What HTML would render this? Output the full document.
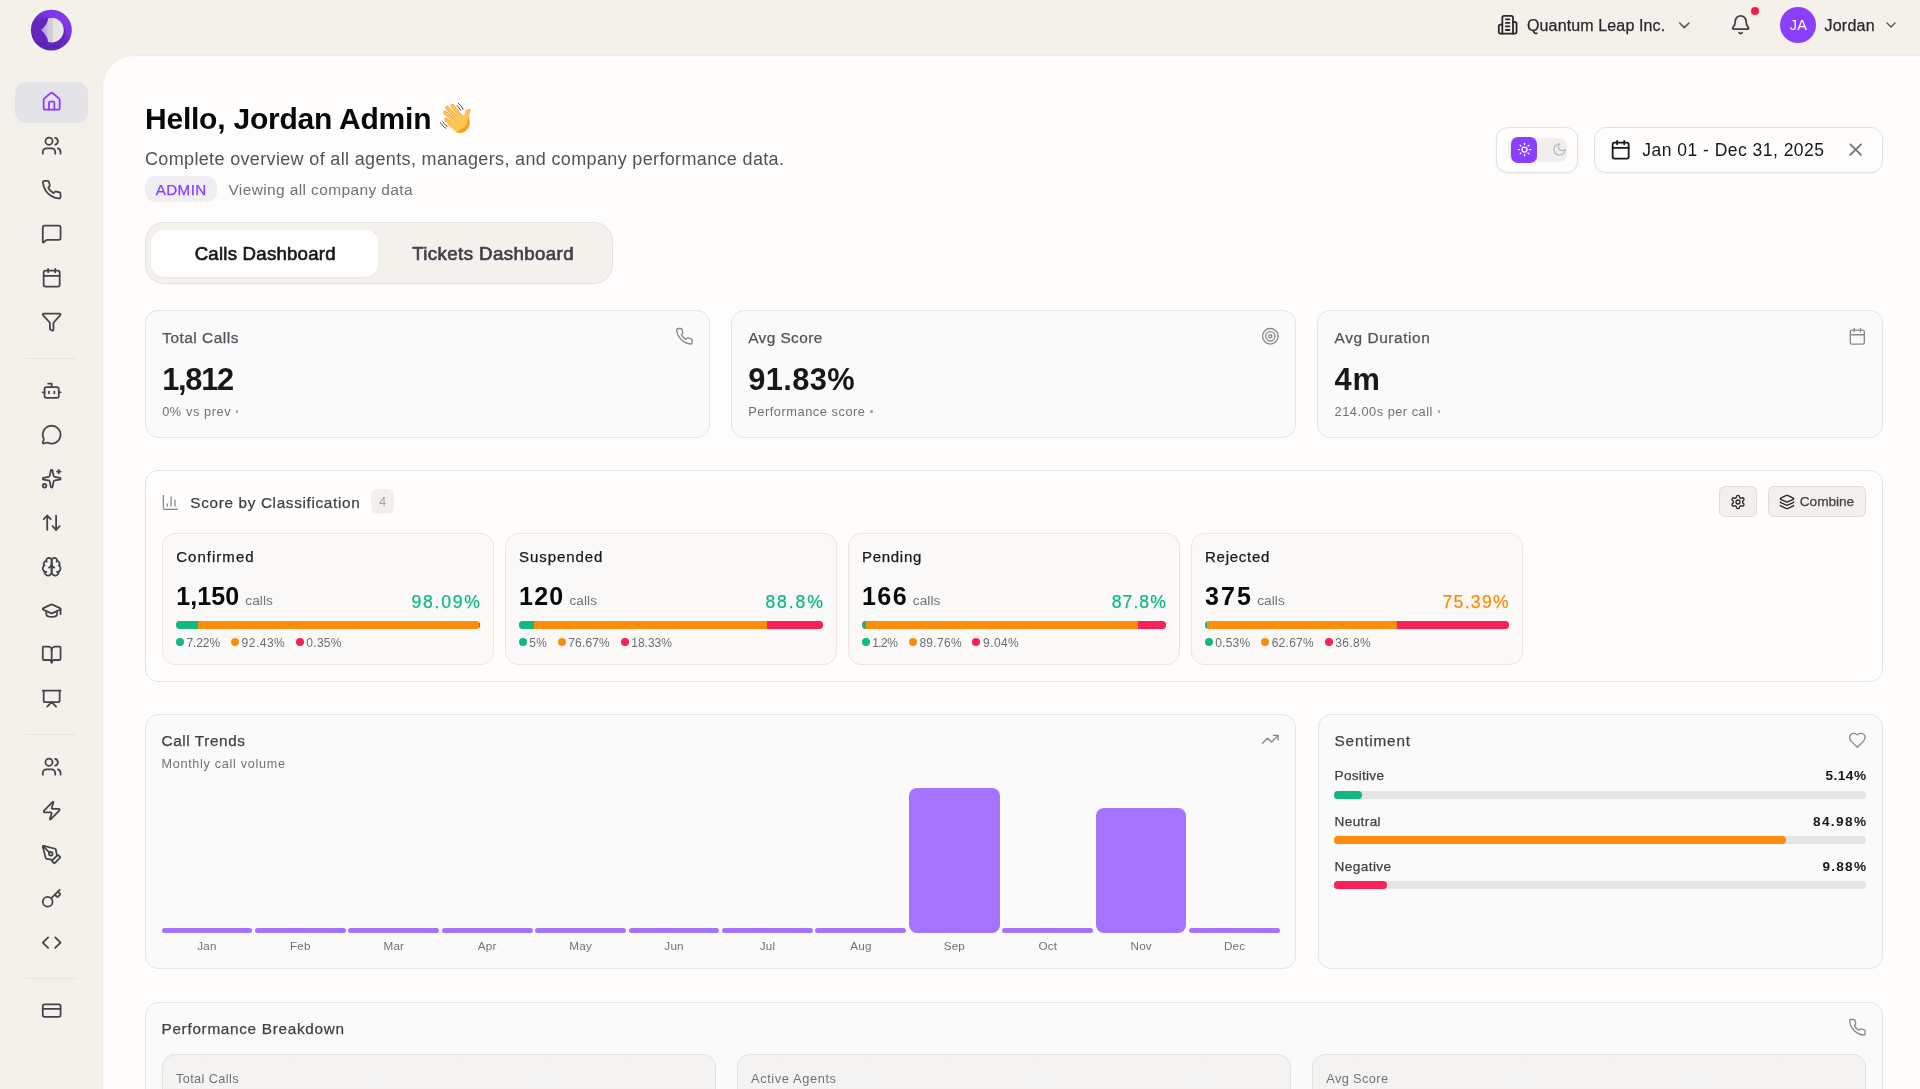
<!DOCTYPE html>
<html lang="en">
<head>
<meta charset="utf-8">
<title>Dashboard</title>
<style>
*{box-sizing:border-box;margin:0;padding:0}
html,body{width:1920px;height:1089px;overflow:hidden}
body{font-family:"Liberation Sans",sans-serif;background:#f4f1eb;color:#18181b;position:relative}
svg{display:block}
.ic{fill:none;stroke:currentColor;stroke-width:2;stroke-linecap:round;stroke-linejoin:round}
.abs{position:absolute}
#root{position:absolute;left:0;top:0;width:1920px;height:1089px;will-change:transform;overflow:hidden}
.t{position:absolute;white-space:nowrap;line-height:1}
.med{-webkit-text-stroke:.25px currentColor}
.sep{position:absolute;left:25px;width:52px;height:1px;background:#e7e4de}
#panel{position:absolute;left:102px;top:55px;width:1830px;height:1060px;background:#fefdfb;border-top-left-radius:32px;border:1px solid #efece6}
.card{position:absolute;background:#fafafa;border:1px solid #e4e4ea;border-radius:13px}
</style>
</head>
<body>
<div id="root">
<div id="panel"></div>
<svg class="abs" style="left:30px;top:9px;width:42px;height:42px" viewBox="0 0 42 42">
<defs><clipPath id="lc"><circle cx="21.300" cy="21.100" r="20.400"/></clipPath>
<linearGradient id="lg" x1="0" x2="1"><stop offset="0" stop-color="#b59af9"/><stop offset=".2" stop-color="#bfaaf2"/><stop offset=".34" stop-color="#cfcbd9"/><stop offset=".46" stop-color="#c9c9cc"/><stop offset=".53" stop-color="#e2e1e5"/><stop offset="1" stop-color="#e9e8eb"/></linearGradient>
<linearGradient id="lh" x1=".15" y1=".85" x2=".75" y2=".1"><stop offset="0" stop-color="#8d40ff" stop-opacity="0"/><stop offset=".5" stop-color="#8d40ff" stop-opacity=".1"/><stop offset=".75" stop-color="#8d40ff" stop-opacity=".6"/><stop offset="1" stop-color="#8d40ff" stop-opacity=".75"/></linearGradient></defs>
<circle cx="21.300" cy="21.100" r="20.400" fill="#6226bd"/>
<g clip-path="url(#lc)"><path fill-rule="evenodd" fill="url(#lh)" d="M0 0H42V42H0Z M18.800 8.200a16.500 16.500 0 1 0 .01 0Z"/></g>
<g fill="#2a1454" opacity=".75"><circle cx="7.28" cy="33.44" r=".5"/><circle cx="8.65" cy="34.55" r=".5"/><circle cx="10.58" cy="34.55" r=".5"/><circle cx="10.58" cy="36.47" r=".5"/><circle cx="13.62" cy="32.34" r=".5"/><circle cx="13.62" cy="34.27" r=".5"/><circle cx="13.62" cy="36.47" r=".5"/><circle cx="15.55" cy="33.44" r=".5"/><circle cx="15.55" cy="35.37" r=".5"/><circle cx="14.72" cy="38.40" r=".5"/><circle cx="16.37" cy="39.50" r=".5"/><circle cx="17.48" cy="37.58" r=".5"/><circle cx="19.40" cy="36.47" r=".5"/><circle cx="19.40" cy="38.40" r=".5"/><circle cx="21.33" cy="36.47" r=".5"/><circle cx="21.33" cy="38.40" r=".5"/><circle cx="23.54" cy="36.47" r=".5"/><circle cx="23.54" cy="38.40" r=".5"/><circle cx="25.47" cy="36.47" r=".5"/><circle cx="26.57" cy="38.40" r=".5"/><circle cx="27.40" cy="36.47" r=".5"/><circle cx="29.60" cy="37.58" r=".5"/></g>
<path d="M18.200 9.300A12.300 12.300 0 1 1 18.200 33Q17.800 27.300 11.100 21.100Q17.800 15 18.200 9.300Z" fill="url(#lg)"/>
</svg>
<div class="abs" style="left:15.40px;top:82.00px;width:72.40px;height:41.00px;border-radius:11px;background:#e4e3e8;"></div>
<svg class="ic abs" style="left:40.94px;top:91.44px;width:21.33px;height:21.33px;color:#8b3dff;stroke-width:2" viewBox="0 0 24 24"><path d="M15 21v-8a1 1 0 0 0-1-1h-4a1 1 0 0 0-1 1v8"/><path d="M3 10a2 2 0 0 1 .709-1.528l7-5.999a2 2 0 0 1 2.582 0l7 5.999A2 2 0 0 1 21 10v9a2 2 0 0 1-2 2H5a2 2 0 0 1-2-2z"/></svg>
<svg class="ic abs" style="left:40.94px;top:135.44px;width:21.33px;height:21.33px;color:#43434b;stroke-width:2" viewBox="0 0 24 24"><path d="M16 21v-2a4 4 0 0 0-4-4H6a4 4 0 0 0-4 4v2"/><circle cx="9" cy="7" r="4"/><path d="M22 21v-2a4 4 0 0 0-3-3.870"/><path d="M16 3.130a4 4 0 0 1 0 7.750"/></svg>
<svg class="ic abs" style="left:40.94px;top:179.44px;width:21.33px;height:21.33px;color:#43434b;stroke-width:2" viewBox="0 0 24 24"><path d="M22 16.920v3a2 2 0 0 1-2.180 2 19.790 19.790 0 0 1-8.630-3.070 19.500 19.500 0 0 1-6-6 19.790 19.790 0 0 1-3.070-8.670A2 2 0 0 1 4.110 2h3a2 2 0 0 1 2 1.720 12.840 12.840 0 0 0 .700 2.810 2 2 0 0 1-.450 2.110L8.090 9.910a16 16 0 0 0 6 6l1.270-1.270a2 2 0 0 1 2.110-.450 12.840 12.840 0 0 0 2.810.700A2 2 0 0 1 22 16.920z"/></svg>
<svg class="ic abs" style="left:40.94px;top:223.44px;width:21.33px;height:21.33px;color:#43434b;stroke-width:2" viewBox="0 0 24 24"><path d="M22 17a2 2 0 0 1-2 2H6.828a2 2 0 0 0-1.414.586l-2.202 2.202A.71.71 0 0 1 2 21.286V5a2 2 0 0 1 2-2h16a2 2 0 0 1 2 2z"/></svg>
<svg class="ic abs" style="left:40.94px;top:267.44px;width:21.33px;height:21.33px;color:#43434b;stroke-width:2" viewBox="0 0 24 24"><path d="M8 2v4"/><path d="M16 2v4"/><rect width="18" height="18" x="3" y="4" rx="2"/><path d="M3 10h18"/></svg>
<svg class="ic abs" style="left:40.94px;top:311.44px;width:21.33px;height:21.33px;color:#43434b;stroke-width:2" viewBox="0 0 24 24"><path d="M10 20a1 1 0 0 0 .553.895l2 1A1 1 0 0 0 14 21v-7a2 2 0 0 1 .517-1.341L21.740 4.670A1 1 0 0 0 21 3H3a1 1 0 0 0-.742 1.670l7.225 7.989A2 2 0 0 1 10 14z"/></svg>
<svg class="ic abs" style="left:40.94px;top:380.03px;width:21.33px;height:21.33px;color:#43434b;stroke-width:2" viewBox="0 0 24 24"><path d="M12 8V4H8"/><rect width="16" height="12" x="4" y="8" rx="2"/><path d="M2 14h2"/><path d="M20 14h2"/><path d="M15 13v2"/><path d="M9 13v2"/></svg>
<svg class="ic abs" style="left:40.94px;top:424.03px;width:21.33px;height:21.33px;color:#43434b;stroke-width:2" viewBox="0 0 24 24"><path d="M2.992 16.342a2 2 0 0 1 .094 1.167l-1.065 3.290a1 1 0 0 0 1.236 1.168l3.413-.998a2 2 0 0 1 1.099.092 10 10 0 1 0-4.777-4.719"/></svg>
<svg class="ic abs" style="left:40.94px;top:468.03px;width:21.33px;height:21.33px;color:#43434b;stroke-width:2" viewBox="0 0 24 24"><path d="M11.017 2.814a1 1 0 0 1 1.966 0l1.051 5.558a2 2 0 0 0 1.594 1.594l5.558 1.051a1 1 0 0 1 0 1.966l-5.558 1.051a2 2 0 0 0-1.594 1.594l-1.051 5.558a1 1 0 0 1-1.966 0l-1.051-5.558a2 2 0 0 0-1.594-1.594l-5.558-1.051a1 1 0 0 1 0-1.966l5.558-1.051a2 2 0 0 0 1.594-1.594z"/><path d="M20 2v4"/><path d="M22 4h-4"/><circle cx="4" cy="20" r="2"/></svg>
<svg class="ic abs" style="left:40.94px;top:512.04px;width:21.33px;height:21.33px;color:#43434b;stroke-width:2" viewBox="0 0 24 24"><path d="m21 16-4 4-4-4"/><path d="M17 20V4"/><path d="m3 8 4-4 4 4"/><path d="M7 4v16"/></svg>
<svg class="ic abs" style="left:40.94px;top:556.04px;width:21.33px;height:21.33px;color:#43434b;stroke-width:2" viewBox="0 0 24 24"><path d="M12 5a3 3 0 1 0-5.997.125 4 4 0 0 0-2.526 5.770 4 4 0 0 0 .556 6.588A4 4 0 1 0 12 18Z"/><path d="M12 5a3 3 0 1 1 5.997.125 4 4 0 0 1 2.526 5.770 4 4 0 0 1-.556 6.588A4 4 0 1 1 12 18Z"/><path d="M15 13a4.500 4.500 0 0 1-3-4 4.500 4.500 0 0 1-3 4"/><path d="M17.599 6.500a3 3 0 0 0 .399-1.375"/><path d="M6.003 5.125A3 3 0 0 0 6.401 6.500"/><path d="M3.477 10.896a4 4 0 0 1 .585-.396"/><path d="M19.938 10.500a4 4 0 0 1 .585.396"/><path d="M6 18a4 4 0 0 1-1.967-.516"/><path d="M19.967 17.484A4 4 0 0 1 18 18"/></svg>
<svg class="ic abs" style="left:40.94px;top:600.04px;width:21.33px;height:21.33px;color:#43434b;stroke-width:2" viewBox="0 0 24 24"><path d="M21.420 10.922a1 1 0 0 0-.019-1.838L12.830 5.180a2 2 0 0 0-1.660 0L2.600 9.080a1 1 0 0 0 0 1.832l8.570 3.908a2 2 0 0 0 1.660 0z"/><path d="M22 10v6"/><path d="M6 12.500V16a6 3 0 0 0 12 0v-3.500"/></svg>
<svg class="ic abs" style="left:40.94px;top:644.04px;width:21.33px;height:21.33px;color:#43434b;stroke-width:2" viewBox="0 0 24 24"><path d="M12 7v14"/><path d="M3 18a1 1 0 0 1-1-1V4a1 1 0 0 1 1-1h5a4 4 0 0 1 4 4 4 4 0 0 1 4-4h5a1 1 0 0 1 1 1v13a1 1 0 0 1-1 1h-6a3 3 0 0 0-3 3 3 3 0 0 0-3-3z"/></svg>
<svg class="ic abs" style="left:40.94px;top:688.04px;width:21.33px;height:21.33px;color:#43434b;stroke-width:2" viewBox="0 0 24 24"><path d="M2 3h20"/><path d="M21 3v11a2 2 0 0 1-2 2H5a2 2 0 0 1-2-2V3"/><path d="m7 21 5-5 5 5"/></svg>
<svg class="ic abs" style="left:40.94px;top:756.04px;width:21.33px;height:21.33px;color:#43434b;stroke-width:2" viewBox="0 0 24 24"><path d="M16 21v-2a4 4 0 0 0-4-4H6a4 4 0 0 0-4 4v2"/><circle cx="9" cy="7" r="4"/><path d="M22 21v-2a4 4 0 0 0-3-3.870"/><path d="M16 3.130a4 4 0 0 1 0 7.750"/></svg>
<svg class="ic abs" style="left:40.94px;top:800.04px;width:21.33px;height:21.33px;color:#43434b;stroke-width:2" viewBox="0 0 24 24"><path d="M4 14a1 1 0 0 1-.780-1.630l9.900-10.200a.5.5 0 0 1 .860.460l-1.920 6.020A1 1 0 0 0 13 10h7a1 1 0 0 1 .780 1.630l-9.900 10.200a.5.5 0 0 1-.860-.460l1.920-6.020A1 1 0 0 0 11 14z"/></svg>
<svg class="ic abs" style="left:40.94px;top:844.04px;width:21.33px;height:21.33px;color:#43434b;stroke-width:2" viewBox="0 0 24 24"><path d="M15.707 21.293a1 1 0 0 1-1.414 0l-1.586-1.586a1 1 0 0 1 0-1.414l5.586-5.586a1 1 0 0 1 1.414 0l1.586 1.586a1 1 0 0 1 0 1.414z"/><path d="m18 13-1.375-6.874a1 1 0 0 0-.746-.776L3.235 2.028a1 1 0 0 0-1.207 1.207L5.350 15.879a1 1 0 0 0 .776.746L13 18"/><path d="m2.300 2.300 7.286 7.286"/><circle cx="11" cy="11" r="2"/></svg>
<svg class="ic abs" style="left:40.94px;top:888.04px;width:21.33px;height:21.33px;color:#43434b;stroke-width:2" viewBox="0 0 24 24"><path d="m15.500 7.500 2.300 2.300a1 1 0 0 0 1.400 0l2.100-2.100a1 1 0 0 0 0-1.400L19 4"/><path d="m21 2-9.600 9.600"/><circle cx="7.500" cy="15.500" r="5.500"/></svg>
<svg class="ic abs" style="left:40.94px;top:932.04px;width:21.33px;height:21.33px;color:#43434b;stroke-width:2" viewBox="0 0 24 24"><path d="m16 18 6-6-6-6"/><path d="m8 6-6 6 6 6"/></svg>
<svg class="ic abs" style="left:40.94px;top:1000.34px;width:21.33px;height:21.33px;color:#43434b;stroke-width:2" viewBox="0 0 24 24"><rect width="20" height="14" x="2" y="5" rx="2"/><line x1="2" x2="22" y1="10" y2="10"/></svg>
<div class="sep" style="top:358px"></div>
<div class="sep" style="top:734px"></div>
<div class="sep" style="top:978px"></div>
<svg class="ic abs" style="left:1497.43px;top:14.23px;width:21.33px;height:21.33px;color:#27272a;stroke-width:2" viewBox="0 0 24 24"><path d="M6 22V4a2 2 0 0 1 2-2h8a2 2 0 0 1 2 2v18Z"/><path d="M6 12H4a2 2 0 0 0-2 2v6a2 2 0 0 0 2 2h2"/><path d="M18 9h2a2 2 0 0 1 2 2v9a2 2 0 0 1-2 2h-2"/><path d="M10 6h4"/><path d="M10 10h4"/><path d="M10 14h4"/><path d="M10 18h4"/></svg>
<div class="t med" style="left:1527.00px;top:18px;font-size:16px;color:#27272a;letter-spacing:0.132px;">Quantum Leap Inc.</div>
<svg class="ic abs" style="left:1675.07px;top:15.86px;width:18.67px;height:18.67px;color:#52525b;stroke-width:2" viewBox="0 0 24 24"><path d="m6 9 6 6 6-6"/></svg>
<svg class="ic abs" style="left:1730.43px;top:14.34px;width:21.33px;height:21.33px;color:#3f3f46;stroke-width:2" viewBox="0 0 24 24"><path d="M10.268 21a2 2 0 0 0 3.464 0"/><path d="M3.262 15.326A1 1 0 0 0 4 17h16a1 1 0 0 0 .740-1.673C19.410 13.956 18 12.499 18 8A6 6 0 0 0 6 8c0 4.499-1.411 5.956-2.738 7.326"/></svg>
<div class="abs" style="left:1751.20px;top:6.80px;width:8.00px;height:8.00px;border-radius:4px;background:#f6194f;"></div>
<div class="abs" style="left:1780.20px;top:6.90px;width:36.00px;height:36.00px;border-radius:18px;background:#8a3ffc;"></div>
<div class="t" style="left:1789.69px;top:18px;font-size:14.5px;color:#ffffff;letter-spacing:0.300px;">JA</div>
<div class="t med" style="left:1824.40px;top:18px;font-size:16px;color:#27272a;letter-spacing:0.255px;">Jordan</div>
<svg class="ic abs" style="left:1883.00px;top:17.20px;width:16px;height:16px;color:#52525b;stroke-width:2" viewBox="0 0 24 24"><path d="m6 9 6 6 6-6"/></svg>
<div class="t" style="left:145.00px;top:104px;font-size:30px;color:#09090b;font-weight:700;letter-spacing:-0.227px;">Hello, Jordan Admin</div>
<svg class="abs" style="left:432px;top:96px;width:48px;height:44px" viewBox="0 0 1188 1089">
<g fill="none" stroke-linecap="round" stroke="#ff9d22" stroke-width="92"><path d="M500 240 L690 480"/><path d="M375 290 L620 550"/><path d="M325 410 L580 630"/><path d="M350 590 L545 735"/></g>
<path d="M540 500 L700 435 Q765 515 812 462 Q838 420 833 372 Q868 312 945 332 Q968 350 936 392 Q895 462 905 532 Q952 682 890 792 Q800 918 668 912 Q598 900 520 812 L390 700 Z" fill="#fcc656" stroke="#ff9d22" stroke-width="14" stroke-linejoin="round"/>
<g fill="none" stroke-linecap="round" stroke="#fcc656" stroke-width="56"><path d="M500 240 L690 480"/><path d="M375 290 L620 550"/><path d="M325 410 L580 630"/><path d="M350 590 L545 735"/></g>
<path d="M908 540 Q952 682 890 792 Q800 918 668 912 Q625 903 592 872 Q690 885 752 800 Q850 762 872 650 Q880 590 908 540Z" fill="#ff9a1f"/>
<g fill="none" stroke-linecap="round" stroke="#4d4d57" stroke-width="24"><path d="M652 180 Q742 240 770 332"/><path d="M618 232 Q682 282 706 350"/><path d="M207 657 Q247 750 345 803"/><path d="M267 642 Q302 710 378 753"/></g>
</svg>
<div class="t" style="left:145.00px;top:150px;font-size:18px;color:#52525b;letter-spacing:0.347px;">Complete overview of all agents, managers, and company performance data.</div>
<div class="abs" style="left:145.00px;top:176.30px;width:71.60px;height:25.70px;border-radius:10px;background:#efeef3;"></div>
<div class="t med" style="left:155.70px;top:182px;font-size:15.2px;color:#8b3dff;letter-spacing:0.405px;">ADMIN</div>
<div class="t" style="left:228.40px;top:182px;font-size:15.5px;color:#71717a;letter-spacing:0.379px;">Viewing all company data</div>
<div class="abs" style="left:1496.00px;top:126.60px;width:82.00px;height:46.00px;border-radius:12px;background:#fefdfc;border:1px solid #e1e0e5;box-shadow:0 1px 3px rgba(0,0,0,.07);"></div>
<div class="abs" style="left:1507.70px;top:137.70px;width:59.60px;height:24.00px;border-radius:8px;background:#f1efeb;"></div>
<div class="abs" style="left:1511.00px;top:136.60px;width:26.00px;height:26.00px;border-radius:7px;background:#8a3ffc;"></div>
<svg class="ic abs" style="left:1516.50px;top:142.10px;width:15px;height:15px;color:#ffffff;stroke-width:2" viewBox="0 0 24 24"><circle cx="12" cy="12" r="4"/><path d="M12 2v2"/><path d="M12 20v2"/><path d="m4.930 4.930 1.410 1.410"/><path d="m17.660 17.660 1.410 1.410"/><path d="M2 12h2"/><path d="M20 12h2"/><path d="m6.340 17.660-1.410 1.410"/><path d="m19.070 4.930-1.410 1.410"/></svg>
<svg class="ic abs" style="left:1551.50px;top:142.10px;width:15px;height:15px;color:#b5b5bc;stroke-width:2" viewBox="0 0 24 24"><path d="M12 3a6 6 0 0 0 9 9 9 9 0 1 1-9-9Z"/></svg>
<div class="abs" style="left:1594.30px;top:126.60px;width:288.50px;height:46.00px;border-radius:12px;background:#fefdfc;border:1px solid #e1e0e5;box-shadow:0 1px 2px rgba(0,0,0,.04);"></div>
<svg class="ic abs" style="left:1610.13px;top:138.84px;width:21.33px;height:21.33px;color:#18181b;stroke-width:2" viewBox="0 0 24 24"><path d="M8 2v4"/><path d="M16 2v4"/><rect width="18" height="18" x="3" y="4" rx="2"/><path d="M3 10h18"/></svg>
<div class="t" style="left:1642.30px;top:142px;font-size:17.5px;color:#18181b;letter-spacing:0.475px;">Jan 01 - Dec 31, 2025</div>
<svg class="ic abs" style="left:1845.34px;top:138.94px;width:21.33px;height:21.33px;color:#71717a;stroke-width:2" viewBox="0 0 24 24"><path d="M18 6 6 18"/><path d="m6 6 12 12"/></svg>
<div class="abs" style="left:145.00px;top:222.40px;width:467.80px;height:61.60px;border-radius:19px;background:#f4f1ed;border:1px solid #e2e1e7;"></div>
<div class="abs" style="left:151.00px;top:229.70px;width:227.40px;height:47.50px;border-radius:13px;background:#ffffff;box-shadow:0 1px 2px rgba(0,0,0,.05);"></div>
<div class="t" style="left:194.70px;top:245px;font-size:18.67px;color:#18181b;letter-spacing:0.213px;-webkit-text-stroke:.65px currentColor;">Calls Dashboard</div>
<div class="t" style="left:412.20px;top:245px;font-size:18.67px;color:#3f3f46;letter-spacing:0.409px;-webkit-text-stroke:.65px currentColor;">Tickets Dashboard</div>
<div class="card" style="left:145px;top:310.400px;width:565.300px;height:127.400px"></div><div class="t med" style="left:162.20px;top:330px;font-size:15.4px;color:#52525b;letter-spacing:0.516px;">Total Calls</div><div class="t" style="left:162.20px;top:365px;font-size:30.8px;color:#18181b;font-weight:700;letter-spacing:-1.269px;">1,812</div><div class="t" style="left:162.20px;top:406px;font-size:12.8px;color:#71717a;letter-spacing:0.565px;">0% vs prev</div><div class="abs" style="left:235.90px;top:410.20px;width:2.60px;height:2.60px;border-radius:1.3px;background:#a1a1aa;"></div><svg class="ic abs" style="left:675.21px;top:326.77px;width:18.67px;height:18.67px;color:#88888f;stroke-width:1.75" viewBox="0 0 24 24"><path d="M22 16.920v3a2 2 0 0 1-2.180 2 19.790 19.790 0 0 1-8.630-3.070 19.500 19.500 0 0 1-6-6 19.790 19.790 0 0 1-3.070-8.670A2 2 0 0 1 4.110 2h3a2 2 0 0 1 2 1.720 12.840 12.840 0 0 0 .700 2.810 2 2 0 0 1-.450 2.110L8.090 9.910a16 16 0 0 0 6 6l1.270-1.270a2 2 0 0 1 2.110-.450 12.840 12.840 0 0 0 2.810.700A2 2 0 0 1 22 16.920z"/></svg>
<div class="card" style="left:731.0px;top:310.400px;width:565.300px;height:127.400px"></div><div class="t med" style="left:748.20px;top:330px;font-size:15.4px;color:#52525b;letter-spacing:0.429px;">Avg Score</div><div class="t" style="left:748.20px;top:365px;font-size:30.8px;color:#18181b;font-weight:700;letter-spacing:0.407px;">91.83%</div><div class="t" style="left:748.20px;top:406px;font-size:12.8px;color:#71717a;letter-spacing:0.542px;">Performance score</div><div class="abs" style="left:870.30px;top:410.20px;width:2.60px;height:2.60px;border-radius:1.3px;background:#a1a1aa;"></div><svg class="ic abs" style="left:1261.21px;top:326.77px;width:18.67px;height:18.67px;color:#88888f;stroke-width:1.75" viewBox="0 0 24 24"><circle cx="12" cy="12" r="10"/><circle cx="12" cy="12" r="6"/><circle cx="12" cy="12" r="2"/></svg>
<div class="card" style="left:1317.4px;top:310.400px;width:565.300px;height:127.400px"></div><div class="t med" style="left:1334.60px;top:330px;font-size:15.4px;color:#52525b;letter-spacing:0.586px;">Avg Duration</div><div class="t" style="left:1334.60px;top:365px;font-size:30.8px;color:#18181b;font-weight:700;letter-spacing:0.684px;">4m</div><div class="t" style="left:1334.60px;top:406px;font-size:12.8px;color:#71717a;letter-spacing:0.495px;">214.00s per call</div><div class="abs" style="left:1437.70px;top:410.20px;width:2.60px;height:2.60px;border-radius:1.3px;background:#a1a1aa;"></div><svg class="ic abs" style="left:1847.62px;top:326.77px;width:18.67px;height:18.67px;color:#88888f;stroke-width:1.75" viewBox="0 0 24 24"><path d="M8 2v4"/><path d="M16 2v4"/><rect width="18" height="18" x="3" y="4" rx="2"/><path d="M3 10h18"/></svg>
<div class="abs" style="left:145.00px;top:469.70px;width:1737.80px;height:212.00px;border-radius:13px;background:#fffefd;border:1px solid #e4e4ea;"></div>
<svg class="ic abs" style="left:161.16px;top:492.67px;width:18.67px;height:18.67px;color:#7d7d85;stroke-width:1.5" viewBox="0 0 24 24"><path d="M3 3v16a2 2 0 0 0 2 2h16"/><path d="M18 17V9"/><path d="M13 17V5"/><path d="M8 17v-3"/></svg>
<div class="t med" style="left:190.30px;top:495px;font-size:15.3px;color:#3f3f46;letter-spacing:0.665px;">Score by Classification</div>
<div class="abs" style="left:370.90px;top:489.40px;width:23.60px;height:24.40px;border-radius:6px;background:#f3f0ec;"></div>
<div class="t" style="left:378.88px;top:495px;font-size:13px;color:#a1a1aa;">4</div>
<div class="abs" style="left:1718.60px;top:486.30px;width:38.30px;height:30.50px;border-radius:5.5px;background:#f3f0ec;border:1px solid #dddce0;"></div>
<svg class="ic abs" style="left:1729.70px;top:493.50px;width:16px;height:16px;color:#27272a;stroke-width:2" viewBox="0 0 24 24"><path d="M12.220 2h-.440a2 2 0 0 0-2 2v.180a2 2 0 0 1-1 1.730l-.430.250a2 2 0 0 1-2 0l-.150-.080a2 2 0 0 0-2.730.730l-.220.380a2 2 0 0 0 .730 2.730l.150.100a2 2 0 0 1 1 1.720v.510a2 2 0 0 1-1 1.740l-.150.090a2 2 0 0 0-.730 2.730l.220.380a2 2 0 0 0 2.730.730l.150-.080a2 2 0 0 1 2 0l.430.250a2 2 0 0 1 1 1.730V20a2 2 0 0 0 2 2h.440a2 2 0 0 0 2-2v-.180a2 2 0 0 1 1-1.730l.430-.250a2 2 0 0 1 2 0l.150.080a2 2 0 0 0 2.730-.730l.220-.390a2 2 0 0 0-.730-2.730l-.150-.080a2 2 0 0 1-1-1.740v-.500a2 2 0 0 1 1-1.740l.150-.090a2 2 0 0 0 .730-2.730l-.220-.380a2 2 0 0 0-2.730-.730l-.150.080a2 2 0 0 1-2 0l-.430-.250a2 2 0 0 1-1-1.730V4a2 2 0 0 0-2-2z"/><circle cx="12" cy="12" r="3"/></svg>
<div class="abs" style="left:1767.90px;top:486.30px;width:98.10px;height:30.50px;border-radius:5.5px;background:#f3f0ec;border:1px solid #dddce0;"></div>
<svg class="ic abs" style="left:1779.00px;top:493.50px;width:16px;height:16px;color:#27272a;stroke-width:2" viewBox="0 0 24 24"><path d="M12.830 2.180a2 2 0 0 0-1.660 0L2.600 6.080a1 1 0 0 0 0 1.830l8.580 3.910a2 2 0 0 0 1.660 0l8.580-3.900a1 1 0 0 0 0-1.830z"/><path d="M2 12a1 1 0 0 0 .580.910l8.600 3.910a2 2 0 0 0 1.650 0l8.580-3.900A1 1 0 0 0 22 12"/><path d="M2 17a1 1 0 0 0 .580.910l8.600 3.910a2 2 0 0 0 1.650 0l8.580-3.900A1 1 0 0 0 22 17"/></svg>
<div class="t med" style="left:1799.80px;top:495px;font-size:13.7px;color:#3f3f46;letter-spacing:-0.071px;">Combine</div>
<div class="abs" style="left:162.20px;top:532.50px;width:332.27px;height:132.70px;border-radius:13px;background:#faf9f8;border:1px solid #e9e7e4;"></div><div class="t med" style="left:176.20px;top:549px;font-size:15px;color:#18181b;letter-spacing:1.026px;">Confirmed</div><div class="t" style="left:176.20px;top:584px;font-size:25px;color:#09090b;font-weight:700;letter-spacing:0.084px;">1,150</div><div class="t" style="left:245.30px;top:594px;font-size:13.6px;color:#71717a;letter-spacing:0.098px;">calls</div><div class="t med" style="left:411.50px;top:594px;font-size:17.6px;color:#10b981;letter-spacing:1.761px;">98.09%</div><div class="abs" style="left:176.20px;top:620.8px;width:303.8px;height:8.2px;border-radius:4.1px;overflow:hidden;background:#fb8c0c"><div class="abs" style="left:0;top:0;height:100%;width:21.93px;background:#10b981"></div><div class="abs" style="right:0;top:0;height:100%;width:1.06px;background:#fa2058"></div></div><div class="abs" style="left:175.70px;top:638.40px;width:8.00px;height:8.00px;border-radius:4px;background:#10b981;"></div><div class="t" style="left:186.40px;top:637px;font-size:12px;color:#6b6b73;letter-spacing:-0.081px;">7.22%</div><div class="abs" style="left:230.90px;top:638.40px;width:8.00px;height:8.00px;border-radius:4px;background:#fb8c0c;"></div><div class="t" style="left:241.60px;top:637px;font-size:12px;color:#6b6b73;letter-spacing:0.500px;">92.43%</div><div class="abs" style="left:295.60px;top:638.40px;width:8.00px;height:8.00px;border-radius:4px;background:#fa2058;"></div><div class="t" style="left:306.30px;top:637px;font-size:12px;color:#6b6b73;letter-spacing:0.294px;">0.35%</div>
<div class="abs" style="left:505.10px;top:532.50px;width:332.27px;height:132.70px;border-radius:13px;background:#faf9f8;border:1px solid #e9e7e4;"></div><div class="t med" style="left:519.10px;top:549px;font-size:15px;color:#18181b;letter-spacing:0.912px;">Suspended</div><div class="t" style="left:519.10px;top:584px;font-size:25px;color:#09090b;font-weight:700;letter-spacing:1.194px;">120</div><div class="t" style="left:569.40px;top:594px;font-size:13.6px;color:#71717a;letter-spacing:0.098px;">calls</div><div class="t med" style="left:765.40px;top:594px;font-size:17.6px;color:#10b981;letter-spacing:1.899px;">88.8%</div><div class="abs" style="left:519.10px;top:620.8px;width:303.8px;height:8.2px;border-radius:4.1px;overflow:hidden;background:#fb8c0c"><div class="abs" style="left:0;top:0;height:100%;width:15.19px;background:#10b981"></div><div class="abs" style="right:0;top:0;height:100%;width:55.69px;background:#fa2058"></div></div><div class="abs" style="left:518.60px;top:638.40px;width:8.00px;height:8.00px;border-radius:4px;background:#10b981;"></div><div class="t" style="left:529.30px;top:637px;font-size:12px;color:#6b6b73;letter-spacing:0.156px;">5%</div><div class="abs" style="left:557.60px;top:638.40px;width:8.00px;height:8.00px;border-radius:4px;background:#fb8c0c;"></div><div class="t" style="left:568.30px;top:637px;font-size:12px;color:#6b6b73;letter-spacing:0.140px;">76.67%</div><div class="abs" style="left:620.50px;top:638.40px;width:8.00px;height:8.00px;border-radius:4px;background:#fa2058;"></div><div class="t" style="left:631.20px;top:637px;font-size:12px;color:#6b6b73;letter-spacing:0.020px;">18.33%</div>
<div class="abs" style="left:848.00px;top:532.50px;width:332.27px;height:132.70px;border-radius:13px;background:#faf9f8;border:1px solid #e9e7e4;"></div><div class="t med" style="left:862.00px;top:549px;font-size:15px;color:#18181b;letter-spacing:0.708px;">Pending</div><div class="t" style="left:862.00px;top:584px;font-size:25px;color:#09090b;font-weight:700;letter-spacing:1.444px;">166</div><div class="t" style="left:912.80px;top:594px;font-size:13.6px;color:#71717a;letter-spacing:0.098px;">calls</div><div class="t med" style="left:1111.80px;top:594px;font-size:17.6px;color:#10b981;letter-spacing:1.024px;">87.8%</div><div class="abs" style="left:862.00px;top:620.8px;width:303.8px;height:8.2px;border-radius:4.1px;overflow:hidden;background:#fb8c0c"><div class="abs" style="left:0;top:0;height:100%;width:3.65px;background:#10b981"></div><div class="abs" style="right:0;top:0;height:100%;width:27.46px;background:#fa2058"></div></div><div class="abs" style="left:861.50px;top:638.40px;width:8.00px;height:8.00px;border-radius:4px;background:#10b981;"></div><div class="t" style="left:872.20px;top:637px;font-size:12px;color:#6b6b73;letter-spacing:-0.551px;">1.2%</div><div class="abs" style="left:908.70px;top:638.40px;width:8.00px;height:8.00px;border-radius:4px;background:#fb8c0c;"></div><div class="t" style="left:919.40px;top:637px;font-size:12px;color:#6b6b73;letter-spacing:0.300px;">89.76%</div><div class="abs" style="left:972.40px;top:638.40px;width:8.00px;height:8.00px;border-radius:4px;background:#fa2058;"></div><div class="t" style="left:983.10px;top:637px;font-size:12px;color:#6b6b73;letter-spacing:0.394px;">9.04%</div>
<div class="abs" style="left:1191.00px;top:532.50px;width:332.27px;height:132.70px;border-radius:13px;background:#faf9f8;border:1px solid #e9e7e4;"></div><div class="t med" style="left:1205.00px;top:549px;font-size:15px;color:#18181b;letter-spacing:0.728px;">Rejected</div><div class="t" style="left:1205.00px;top:584px;font-size:25px;color:#09090b;font-weight:700;letter-spacing:2.144px;">375</div><div class="t" style="left:1257.20px;top:594px;font-size:13.6px;color:#71717a;letter-spacing:0.098px;">calls</div><div class="t med" style="left:1442.40px;top:594px;font-size:17.6px;color:#fb8c0c;letter-spacing:1.341px;">75.39%</div><div class="abs" style="left:1205.00px;top:620.8px;width:303.8px;height:8.2px;border-radius:4.1px;overflow:hidden;background:#fb8c0c"><div class="abs" style="left:0;top:0;height:100%;width:1.61px;background:#10b981"></div><div class="abs" style="right:0;top:0;height:100%;width:111.80px;background:#fa2058"></div></div><div class="abs" style="left:1204.50px;top:638.40px;width:8.00px;height:8.00px;border-radius:4px;background:#10b981;"></div><div class="t" style="left:1215.20px;top:637px;font-size:12px;color:#6b6b73;letter-spacing:0.244px;">0.53%</div><div class="abs" style="left:1261.00px;top:638.40px;width:8.00px;height:8.00px;border-radius:4px;background:#fb8c0c;"></div><div class="t" style="left:1271.70px;top:637px;font-size:12px;color:#6b6b73;letter-spacing:0.260px;">62.67%</div><div class="abs" style="left:1324.50px;top:638.40px;width:8.00px;height:8.00px;border-radius:4px;background:#fa2058;"></div><div class="t" style="left:1335.20px;top:637px;font-size:12px;color:#6b6b73;letter-spacing:0.344px;">36.8%</div>
<div class="card" style="left:145px;top:713.800px;width:1151.300px;height:255.600px"></div>
<div class="t med" style="left:161.50px;top:733px;font-size:15.3px;color:#3f3f46;letter-spacing:0.602px;">Call Trends</div>
<div class="t" style="left:161.50px;top:758px;font-size:12.6px;color:#71717a;letter-spacing:0.714px;">Monthly call volume</div>
<svg class="ic abs" style="left:1261.37px;top:729.96px;width:18.67px;height:18.67px;color:#88888f;stroke-width:1.75" viewBox="0 0 24 24"><path d="M16 7h6v6"/><path d="m22 7-8.500 8.500-5-5L2 17"/></svg>
<div class="abs" style="left:161.50px;top:927.90px;width:90.75px;height:5.00px;border-radius:2.5px;background:#a474ff;"></div>
<div class="t" style="left:197.27px;top:940px;font-size:11.7px;color:#71717a;letter-spacing:0.200px;">Jan</div>
<div class="abs" style="left:254.92px;top:927.90px;width:90.75px;height:5.00px;border-radius:2.5px;background:#a474ff;"></div>
<div class="t" style="left:290.04px;top:940px;font-size:11.7px;color:#71717a;letter-spacing:0.200px;">Feb</div>
<div class="abs" style="left:348.34px;top:927.90px;width:90.75px;height:5.00px;border-radius:2.5px;background:#a474ff;"></div>
<div class="t" style="left:383.46px;top:940px;font-size:11.7px;color:#71717a;letter-spacing:0.200px;">Mar</div>
<div class="abs" style="left:441.76px;top:927.90px;width:90.75px;height:5.00px;border-radius:2.5px;background:#a474ff;"></div>
<div class="t" style="left:477.86px;top:940px;font-size:11.7px;color:#71717a;letter-spacing:0.200px;">Apr</div>
<div class="abs" style="left:535.18px;top:927.90px;width:90.75px;height:5.00px;border-radius:2.5px;background:#a474ff;"></div>
<div class="t" style="left:569.33px;top:940px;font-size:11.7px;color:#71717a;letter-spacing:0.200px;">May</div>
<div class="abs" style="left:628.60px;top:927.90px;width:90.75px;height:5.00px;border-radius:2.5px;background:#a474ff;"></div>
<div class="t" style="left:664.37px;top:940px;font-size:11.7px;color:#71717a;letter-spacing:0.200px;">Jun</div>
<div class="abs" style="left:722.02px;top:927.90px;width:90.75px;height:5.00px;border-radius:2.5px;background:#a474ff;"></div>
<div class="t" style="left:759.74px;top:940px;font-size:11.7px;color:#71717a;letter-spacing:0.200px;">Jul</div>
<div class="abs" style="left:815.44px;top:927.90px;width:90.75px;height:5.00px;border-radius:2.5px;background:#a474ff;"></div>
<div class="t" style="left:850.23px;top:940px;font-size:11.7px;color:#71717a;letter-spacing:0.200px;">Aug</div>
<div class="abs" style="left:908.86px;top:787.80px;width:90.75px;height:145.10px;border-radius:8px;background:#a474ff;"></div>
<div class="t" style="left:943.65px;top:940px;font-size:11.7px;color:#71717a;letter-spacing:0.200px;">Sep</div>
<div class="abs" style="left:1002.28px;top:927.90px;width:90.75px;height:5.00px;border-radius:2.5px;background:#a474ff;"></div>
<div class="t" style="left:1038.38px;top:940px;font-size:11.7px;color:#71717a;letter-spacing:0.200px;">Oct</div>
<div class="abs" style="left:1095.70px;top:807.90px;width:90.75px;height:125.00px;border-radius:8px;background:#a474ff;"></div>
<div class="t" style="left:1130.50px;top:940px;font-size:11.7px;color:#71717a;letter-spacing:0.200px;">Nov</div>
<div class="abs" style="left:1189.12px;top:927.90px;width:90.75px;height:5.00px;border-radius:2.5px;background:#a474ff;"></div>
<div class="t" style="left:1223.92px;top:940px;font-size:11.7px;color:#71717a;letter-spacing:0.200px;">Dec</div>
<div class="card" style="left:1317.600px;top:713.800px;width:565.300px;height:255.600px"></div>
<div class="t med" style="left:1334.60px;top:733px;font-size:15.3px;color:#3f3f46;letter-spacing:0.814px;">Sentiment</div>
<svg class="ic abs" style="left:1848.16px;top:730.87px;width:18.67px;height:18.67px;color:#88888f;stroke-width:1.75" viewBox="0 0 24 24"><path d="M19 14c1.490-1.460 3-3.210 3-5.500A5.500 5.500 0 0 0 16.500 3c-1.760 0-3 .5-4.500 2-1.500-1.500-2.740-2-4.500-2A5.500 5.500 0 0 0 2 8.500c0 2.300 1.500 4.050 3 5.500l7 7Z"/></svg>
<div class="t med" style="left:1334.60px;top:769px;font-size:13.6px;color:#3f3f46;letter-spacing:0.254px;">Positive</div>
<div class="t" style="left:1825.40px;top:769px;font-size:13.6px;color:#18181b;font-weight:700;letter-spacing:0.509px;">5.14%</div>
<div class="abs" style="left:1334.20px;top:791.00px;width:531.80px;height:7.70px;border-radius:3.85px;background:#e4e4e7;"></div>
<div class="abs" style="left:1334.20px;top:791.00px;width:27.33px;height:7.70px;border-radius:3.85px;background:#10b981;"></div>
<div class="t med" style="left:1334.60px;top:815px;font-size:13.6px;color:#3f3f46;letter-spacing:0.359px;">Neutral</div>
<div class="t" style="left:1813.00px;top:815px;font-size:13.6px;color:#18181b;font-weight:700;letter-spacing:1.375px;">84.98%</div>
<div class="abs" style="left:1334.20px;top:836.20px;width:531.80px;height:7.70px;border-radius:3.85px;background:#e4e4e7;"></div>
<div class="abs" style="left:1334.20px;top:836.20px;width:451.92px;height:7.70px;border-radius:3.85px;background:#fb8c0c;"></div>
<div class="t med" style="left:1334.60px;top:860px;font-size:13.6px;color:#3f3f46;letter-spacing:0.403px;">Negative</div>
<div class="t" style="left:1822.50px;top:860px;font-size:13.6px;color:#18181b;font-weight:700;letter-spacing:1.234px;">9.88%</div>
<div class="abs" style="left:1334.20px;top:881.20px;width:531.80px;height:7.70px;border-radius:3.85px;background:#e4e4e7;"></div>
<div class="abs" style="left:1334.20px;top:881.20px;width:52.54px;height:7.70px;border-radius:3.85px;background:#fa2058;"></div>
<div class="card" style="left:145px;top:1001.900px;width:1737.800px;height:200px"></div>
<div class="t med" style="left:161.50px;top:1021px;font-size:15.3px;color:#3f3f46;letter-spacing:0.706px;">Performance Breakdown</div>
<svg class="ic abs" style="left:1848.07px;top:1017.87px;width:18.67px;height:18.67px;color:#88888f;stroke-width:1.75" viewBox="0 0 24 24"><path d="M22 16.920v3a2 2 0 0 1-2.180 2 19.790 19.790 0 0 1-8.630-3.070 19.500 19.500 0 0 1-6-6 19.790 19.790 0 0 1-3.070-8.670A2 2 0 0 1 4.110 2h3a2 2 0 0 1 2 1.720 12.840 12.840 0 0 0 .700 2.810 2 2 0 0 1-.450 2.110L8.090 9.910a16 16 0 0 0 6 6l1.270-1.270a2 2 0 0 1 2.110-.450 12.840 12.840 0 0 0 2.810.700A2 2 0 0 1 22 16.920z"/></svg>
<div class="abs" style="left:162.00px;top:1053.80px;width:553.80px;height:120.00px;border-radius:13px;background:#f5f4f3;border:1px solid #e3e1de;background-image:radial-gradient(rgba(0,0,0,.022) .6px,transparent .8px);background-size:2.67px 2.67px;"></div>
<div class="t" style="left:175.90px;top:1073px;font-size:12.8px;color:#71717a;letter-spacing:0.375px;">Total Calls</div>
<div class="abs" style="left:737.10px;top:1053.80px;width:553.80px;height:120.00px;border-radius:13px;background:#f5f4f3;border:1px solid #e3e1de;background-image:radial-gradient(rgba(0,0,0,.022) .6px,transparent .8px);background-size:2.67px 2.67px;"></div>
<div class="t" style="left:751.00px;top:1073px;font-size:12.8px;color:#71717a;letter-spacing:0.620px;">Active Agents</div>
<div class="abs" style="left:1312.30px;top:1053.80px;width:553.80px;height:120.00px;border-radius:13px;background:#f5f4f3;border:1px solid #e3e1de;background-image:radial-gradient(rgba(0,0,0,.022) .6px,transparent .8px);background-size:2.67px 2.67px;"></div>
<div class="t" style="left:1326.20px;top:1073px;font-size:12.8px;color:#71717a;letter-spacing:0.385px;">Avg Score</div>
</div>
</body>
</html>
